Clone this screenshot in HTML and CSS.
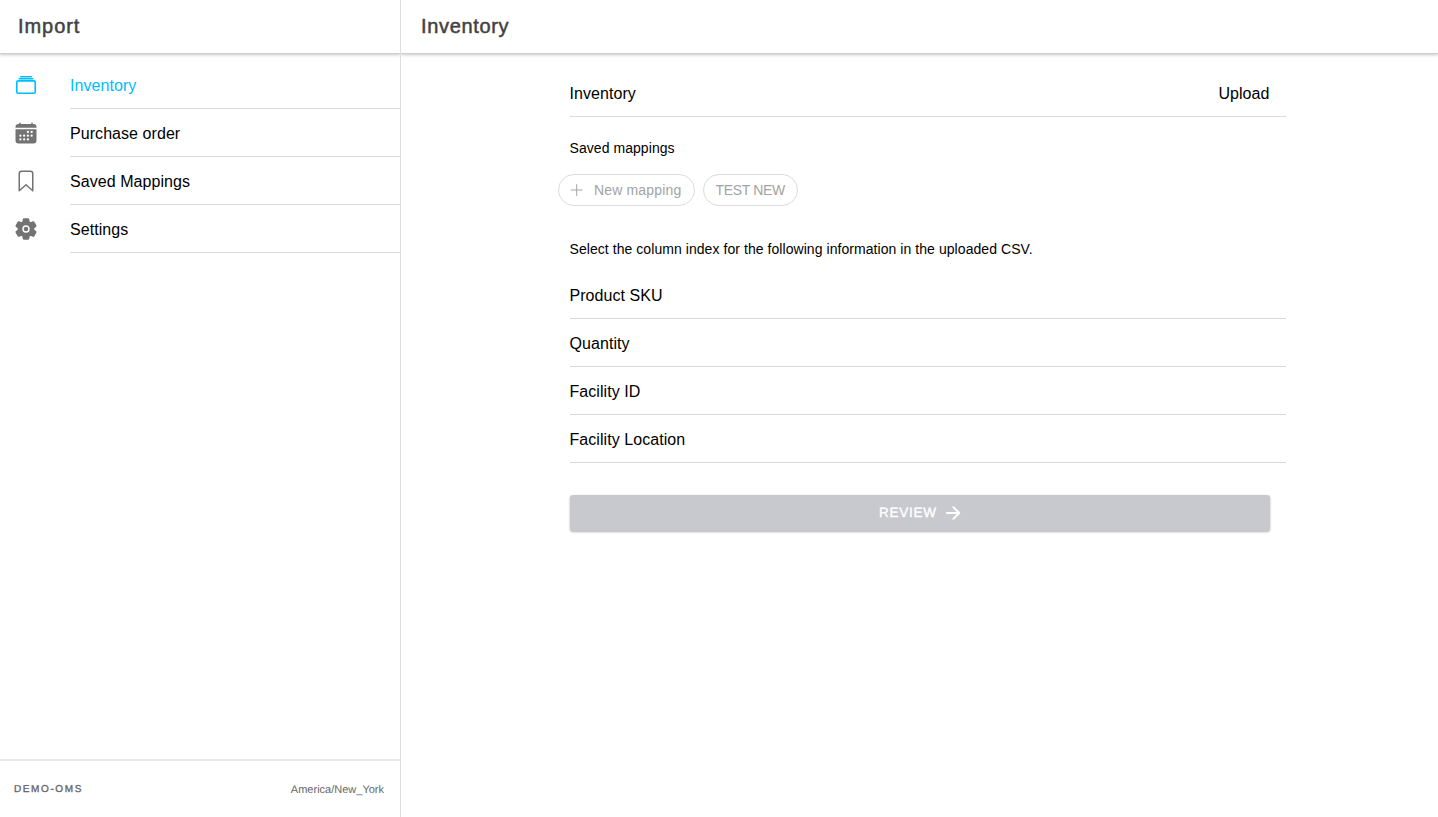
FILE: index.html
```html
<!DOCTYPE html>
<html lang="en">
<head>
<meta charset="utf-8">
<title>Import</title>
<link rel="stylesheet" href="styles.css">
</head>
<body>
<div class="app">
  <aside class="menu">
    <header class="header"><h1 class="title title-menu">Import</h1></header>
    <nav class="menu-list">
      <a class="menu-item active">
        <svg class="icon" viewBox="0 0 512 512"><g fill="none" stroke="currentColor" stroke-width="34" stroke-linejoin="round" stroke-linecap="round"><rect x="59" y="168" width="394" height="264" rx="30"/><path d="M144 80h224M112 122h288"/></g></svg>
        <span class="menu-label">Inventory</span>
      </a>
      <a class="menu-item">
        <svg class="icon" viewBox="0 0 512 512"><path fill="currentColor" d="M480 128a64 64 0 00-64-64h-16V48a16 16 0 00-32 0v16H144V48a16 16 0 00-32 0v16H96a64 64 0 00-64 64v12a4 4 0 004 4h440a4 4 0 004-4zM32 416a64 64 0 0064 64h320a64 64 0 0064-64V179a3 3 0 00-3-3H35a3 3 0 00-3 3z"/><g fill="#fff"><circle cx="296" cy="232" r="24"/><circle cx="376" cy="232" r="24"/><circle cx="136" cy="312" r="24"/><circle cx="216" cy="312" r="24"/><circle cx="296" cy="312" r="24"/><circle cx="376" cy="312" r="24"/><circle cx="136" cy="392" r="24"/><circle cx="216" cy="392" r="24"/><circle cx="296" cy="392" r="24"/></g></svg>
        <span class="menu-label">Purchase order</span>
      </a>
      <a class="menu-item">
        <svg class="icon" viewBox="0 0 512 512"><path fill="none" stroke="currentColor" stroke-width="32" stroke-linejoin="round" stroke-linecap="round" d="M352 48H160a48 48 0 00-48 48v368l144-128 144 128V96a48 48 0 00-48-48z"/></svg>
        <span class="menu-label">Saved Mappings</span>
      </a>
      <a class="menu-item">
        <svg class="icon" viewBox="0 0 512 512"><g fill="currentColor"><circle cx="256" cy="256" r="48"/><path d="M470.39 300l-.47-.38-31.56-24.75a16.11 16.11 0 01-6.1-13.33v-11.56a16 16 0 016.11-13.22L469.92 212l.47-.38a26.68 26.68 0 005.9-34.06l-42.71-73.9a1.59 1.59 0 01-.13-.22A26.86 26.86 0 00401 92.14l-.35.13-37.1 14.93a15.94 15.94 0 01-14.47-1.29q-4.92-3.1-10-5.86a15.94 15.94 0 01-8.19-11.82l-5.59-39.59-.12-.72A27.22 27.22 0 00298.76 26h-85.52a26.92 26.92 0 00-26.45 22.39l-.09.56-5.57 39.67a16 16 0 01-8.13 11.82 175.21 175.21 0 00-10 5.82 15.92 15.92 0 01-14.43 1.27l-37.13-15-.35-.14a26.87 26.87 0 00-32.48 11.34l-.13.22-42.77 73.95a26.71 26.71 0 005.9 34.1l.47.38 31.56 24.75a16.11 16.11 0 016.1 13.33v11.56a16 16 0 01-6.11 13.22L42.08 300l-.47.38a26.68 26.68 0 00-5.9 34.06l42.71 73.9a1.59 1.59 0 01.13.22 26.86 26.86 0 0032.45 11.3l.35-.13 37.07-14.93a15.94 15.94 0 0114.47 1.29q4.92 3.11 10 5.86a15.94 15.94 0 018.19 11.82l5.56 39.59.12.72A27.22 27.22 0 00213.24 486h85.52a26.92 26.92 0 0026.45-22.39l.09-.56 5.57-39.67a16 16 0 018.18-11.82c3.42-1.84 6.76-3.79 10-5.82a15.92 15.92 0 0114.43-1.27l37.13 14.95.35.14a26.85 26.85 0 0032.48-11.34 2.53 2.53 0 01.13-.22l42.71-73.89a26.7 26.7 0 00-5.89-34.11zm-134.48-40.24a80 80 0 11-83.66-83.67 80.21 80.21 0 0183.66 83.67z"/></g></svg>
        <span class="menu-label">Settings</span>
      </a>
    </nav>
    <footer class="menu-footer"><span class="instance">DEMO-OMS</span><span class="timezone">America/New_York</span></footer>
  </aside>
  <div class="page">
    <header class="header"><h1 class="title title-page">Inventory</h1></header>
    <main class="content">
      <div class="row"><span>Inventory</span><span>Upload</span></div>
      <div class="list-header">Saved mappings</div>
      <div class="chips">
        <span class="chip chip-new"><svg class="chip-icon" viewBox="0 0 512 512"><path fill="none" stroke="currentColor" stroke-width="26" stroke-linecap="round" d="M256 112v288M400 256H112"/></svg>New mapping</span>
        <span class="chip chip-saved">TEST NEW</span>
      </div>
      <div class="list-header hint">Select the column index for the following information in the uploaded CSV.</div>
      <div class="row">Product SKU</div>
      <div class="row">Quantity</div>
      <div class="row">Facility ID</div>
      <div class="row">Facility Location</div>
      <button class="review" type="button">REVIEW<svg class="review-icon" viewBox="0 0 512 512"><path fill="none" stroke="currentColor" stroke-width="54" stroke-linecap="round" stroke-linejoin="round" d="M268 92l164 164-164 164M412 256H80"/></svg></button>
    </main>
  </div>
</div>
</body>
</html>
```
FILE: styles.css
```css
* { box-sizing: border-box; }
body {
  margin: 0;
  background: #fff;
  color: #000;
  font: 16px/20px "Liberation Sans", Arial, sans-serif;
  letter-spacing: .06px;
}
.app { display: flex; height: 100vh; overflow: hidden; }
.menu {
  display: flex;
  flex-direction: column;
  width: 401px;
  border-right: 1px solid #dedede;
}
.page { flex: 1; overflow: hidden; }
.header {
  display: flex;
  align-items: center;
  height: 53px;
  padding-bottom: 2px;
  background: #fff;
  box-shadow: 0 1px 0 #cdcdcd, 0 2px 3px rgba(0, 0, 0, .22);
}
.menu .header { clip-path: inset(0 0 -8px 0); }
.title {
  margin: 0;
  color: #424242;
  font-size: 20px;
  font-weight: 400;
  line-height: 24px;
  -webkit-text-stroke: .5px #424242;
}
.title-menu { padding-left: 18px; letter-spacing: .95px; }
.title-page { padding-left: 20px; letter-spacing: .65px; }
.menu-list { flex: 1; padding-top: 8px; }
.menu-item { display: flex; align-items: center; height: 48px; padding-left: 14px; }
.icon { width: 24px; height: 24px; margin-right: 32px; color: #737373; }
.menu-label { flex: 1; height: 48px; border-bottom: 1px solid #dadada; line-height: 49px; }
.active, .active .icon { color: #00bdff; }
.menu-footer {
  display: flex;
  align-items: center;
  justify-content: space-between;
  height: 58px;
  padding: 2px 16px 0 14px;
  border-top: 2px solid #e9e9e9;
  color: #666;
  text-rendering: geometricPrecision;
}
.instance { font-size: 10px; letter-spacing: 1.6px; -webkit-text-stroke: .35px #666; }
.timezone { font-size: 11px; letter-spacing: 0; }
.content { width: 732px; margin: 0 auto; padding: 16px 0 0 16px; }
.row {
  display: flex;
  justify-content: space-between;
  height: 48px;
  padding-right: 16px;
  border-bottom: 1px solid #dadada;
  line-height: 49px;
}
.list-header { height: 53px; font-size: 14px; line-height: 62px; }
.chips { display: flex; gap: 8px; margin: 4px 0 0 -12px; }
.chip {
  display: flex;
  align-items: center;
  height: 32px;
  padding: 0 12px;
  border: 1px solid #dcdcdc;
  border-radius: 16px;
  color: #a3a3a3;
  font-size: 14px;
  white-space: nowrap;
}
.chip-new { width: 137px; letter-spacing: .18px; }
.chip-saved { width: 95px; letter-spacing: -.35px; }
.chip-icon { width: 20px; height: 20px; margin: 0 8px 0 -4px; }
.hint { height: 65px; line-height: 86px; }
.review {
  display: flex;
  align-items: center;
  justify-content: center;
  width: 700px;
  height: 36px;
  margin-top: 32px;
  padding: 0 0 0 2px;
  border: 0;
  border-radius: 3px;
  background: #c8c9ce;
  box-shadow: 0 1px 2px rgba(0, 0, 0, .2), 0 1px 3px rgba(0, 0, 0, .12);
  color: #fff;
  font: 13.5px/20px "Liberation Sans", Arial, sans-serif;
  letter-spacing: .75px;
  text-rendering: geometricPrecision;
  -webkit-text-stroke: .35px #fff;
}
.review-icon { width: 18px; height: 18px; margin-left: 7px; }
```
